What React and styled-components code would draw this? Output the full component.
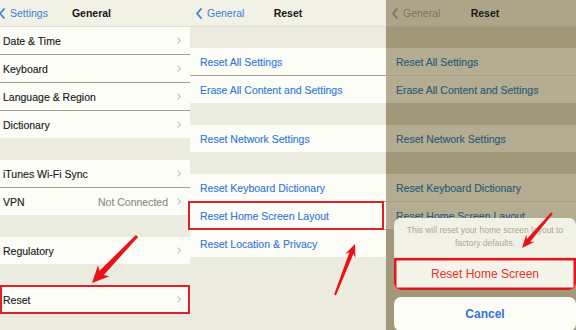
import React from 'react'
import styled, { createGlobalStyle } from 'styled-components'

const GlobalStyle = createGlobalStyle`
  html, body { margin: 0; padding: 0; background: #ecebdf; }
  body { font-family: "Liberation Sans", Arial, sans-serif; }
`

const light = {
  nav: '#f2f1e5', navLine: '#e0ded0', gap: '#ecebdf', row: '#fdfdf8', sep: '#e6e4d8',
  text: '#1c1c1a', link: '#3479d9', back: '#3a80dc', title: '#151515',
}
const dim = {
  nav: '#aca58a', navLine: '#a39c81', gap: '#a09879', row: '#b4ad92', sep: '#a69f84',
  text: '#1f1e19', link: '#2c5a77', back: '#7c7562', title: '#1a1913',
}

const Page = styled.div`
  position: relative;
  display: flex;
  width: 576px;
  height: 330px;
  overflow: hidden;
`
const Frame = styled.div`
  position: relative;
  flex: none;
  width: ${(p) => p.$w}px;
  height: 330px;
  overflow: ${(p) => (p.$clip ? 'hidden' : 'visible')};
`
const Screen = styled.div`
  width: ${(p) => p.$w}px;
  margin-left: ${(p) => p.$shift || 0}px;
  height: 330px;
  display: flex;
  flex-direction: column;
  background: ${(p) => p.$t.gap};
`
const NavBar = styled.div`
  flex: none;
  height: 26px;
  border-bottom: 1px solid ${(p) => p.$t.navLine};
  background: ${(p) => p.$t.nav};
  display: grid;
  grid-template-columns: 1fr auto 1fr;
  align-items: center;
  padding: 0 6px;
  font-size: 10.5px;
`
const Back = styled.div`
  display: flex;
  align-items: center;
  gap: 5px;
  color: ${(p) => p.$t.back};
`
const Title = styled.div`
  font-weight: bold;
  color: ${(p) => p.$t.title};
`
const Gap = styled.div`
  flex: none;
  height: ${(p) => p.$h}px;
`
const Group = styled.div`
  display: flex;
  flex-direction: column;
`
const Row = styled.div`
  position: relative;
  height: 27px;
  display: flex;
  align-items: center;
  padding: 0 9px 0 10px;
  background: ${(p) => p.$t.row};
  color: ${(p) => (p.$link ? p.$t.link : p.$t.text)};
  font-size: 10.5px;
  -webkit-text-stroke: 0.15px currentColor;
  & + & { border-top: 1px solid ${(p) => p.$t.sep}; }
  ${(p) => p.$mark && `
    &::after {
      content: '';
      position: absolute;
      top: -1px; bottom: -1px;
      left: ${p.$mark.left}px; right: ${p.$mark.right}px;
      border: 2.5px solid #e01f26;
      z-index: 3;
    }
  `}
`
const Label = styled.span`
  flex: 1;
  white-space: nowrap;
`
const Detail = styled.span`
  color: #8e8c80;
  margin-right: 9px;
`
const Sheet = styled.div`
  position: absolute;
  left: 8px;
  top: 218px;
  width: 182px;
  display: flex;
  flex-direction: column;
  gap: 7px;
  z-index: 2;
`
const SheetCard = styled.div`
  border-radius: 7px;
  background: #f2f1e5;
  overflow: hidden;
`
const Message = styled.div`
  padding: 6px 10px 7px;
  font-size: 8.5px;
  line-height: 13px;
  color: #aaa899;
  text-align: center;
`
const SheetButton = styled.div`
  height: ${(p) => (p.$cancel ? 34 : 32)}px;
  display: flex;
  align-items: center;
  justify-content: center;
  font-size: 12px;
  font-weight: ${(p) => (p.$cancel ? 'bold' : 'normal')};
  color: ${(p) => (p.$cancel ? '#2f74d9' : '#e5322b')};
  background: ${(p) => (p.$cancel ? '#fdfdf8' : '#f5f4ea')};
  border-top: ${(p) => (p.$cancel ? 'none' : '1px solid #dcdacd')};
  border-radius: ${(p) => (p.$cancel ? '7px' : '0')};
  box-shadow: ${(p) => (p.$mark ? 'inset 0 0 0 2.5px #e3161c' : 'none')};
`
const Arrows = styled.svg`
  position: absolute;
  left: 0;
  top: 0;
  pointer-events: none;
  z-index: 5;
`

function BackChevron() {
  return (
    <svg width="6" height="11" viewBox="0 0 6 11">
      <polyline points="5,1 1,5.5 5,10" fill="none" stroke="currentColor" strokeWidth="1.8" strokeLinecap="round" strokeLinejoin="round" />
    </svg>
  )
}

function RowChevron() {
  return (
    <svg width="4" height="7" viewBox="0 0 4 7">
      <polyline points="0.6,0.6 3.4,3.5 0.6,6.4" fill="none" stroke="#c4c2b5" strokeWidth="1.1" />
    </svg>
  )
}

function arrowPoints([x1, y1], [x2, y2], { tail = 1, shaft = 2.6, head = 7.5, len = 16 }) {
  const L = Math.hypot(x2 - x1, y2 - y1)
  const ux = (x2 - x1) / L
  const uy = (y2 - y1) / L
  const nx = -uy
  const ny = ux
  const bx = x2 - ux * len
  const by = y2 - uy * len
  const sx = x2 - ux * (len - 3)
  const sy = y2 - uy * (len - 3)
  const pts = [
    [x1 + nx * tail, y1 + ny * tail],
    [sx + nx * shaft, sy + ny * shaft],
    [bx + nx * head, by + ny * head],
    [x2, y2],
    [bx - nx * head, by - ny * head],
    [sx - nx * shaft, sy - ny * shaft],
    [x1 - nx * tail, y1 - ny * tail],
  ]
  return pts.map((p) => p.map((v) => v.toFixed(1)).join(',')).join(' ')
}

const generalGroups = [
  { gap: 0, rows: [{ label: 'Date & Time' }, { label: 'Keyboard' }, { label: 'Language & Region' }, { label: 'Dictionary' }] },
  { gap: 22, rows: [{ label: 'iTunes Wi-Fi Sync' }, { label: 'VPN', detail: 'Not Connected' }] },
  { gap: 22, rows: [{ label: 'Regulatory' }] },
  { gap: 22, rows: [{ label: 'Reset', mark: { left: 7, right: 0 } }] },
]

// the dimmed copy behind the action sheet leaves out the row the sheet hides
function resetGroups(markHome, withLocation) {
  const last = [
    { label: 'Reset Keyboard Dictionary' },
    { label: 'Reset Home Screen Layout', mark: markHome ? { left: -2, right: 2 } : null },
  ]
  if (withLocation) last.push({ label: 'Reset Location & Privacy' })
  return [
    { gap: 21, rows: [{ label: 'Reset All Settings' }, { label: 'Erase All Content and Settings' }] },
    { gap: 22, rows: [{ label: 'Reset Network Settings' }] },
    { gap: 22, rows: last },
  ]
}

function SettingsScreen({ t, width, shift, back, title, groups, link, chevrons }) {
  return (
    <Screen $t={t} $w={width} $shift={shift}>
      <NavBar $t={t}>
        <Back $t={t}>
          <BackChevron />
          <span>{back}</span>
        </Back>
        <Title $t={t}>{title}</Title>
        <span />
      </NavBar>
      {groups.map((g, i) => (
        <React.Fragment key={i}>
          {g.gap > 0 && <Gap $h={g.gap} />}
          <Group>
            {g.rows.map((r) => (
              <Row key={r.label} $t={t} $link={link} $mark={r.mark}>
                <Label>{r.label}</Label>
                {r.detail && <Detail>{r.detail}</Detail>}
                {chevrons && <RowChevron />}
              </Row>
            ))}
          </Group>
        </React.Fragment>
      ))}
    </Screen>
  )
}

export default function App() {
  return (
    <>
      <GlobalStyle />
      <Page>
        <Frame $w={190} $clip>
          <SettingsScreen t={light} width={197} shift={-7} back="Settings" title="General" groups={generalGroups} chevrons />
        </Frame>
        <Frame $w={196}>
          <SettingsScreen t={light} width={196} back="General" title="Reset" groups={resetGroups(true, true)} link />
        </Frame>
        <Frame $w={190} $clip>
          <SettingsScreen t={dim} width={198} back="General" title="Reset" groups={resetGroups(false, false)} link />
          <Sheet>
            <SheetCard>
              <Message>
                This will reset your home screen layout to
                <br />
                factory defaults.
              </Message>
              <SheetButton $mark>Reset Home Screen</SheetButton>
            </SheetCard>
            <SheetButton $cancel>Cancel</SheetButton>
          </Sheet>
        </Frame>
        <Arrows width="576" height="330" viewBox="0 0 576 330">
          <polygon points={arrowPoints([137, 236], [92, 283], { tail: 1.5, shaft: 3, head: 8, len: 17 })} fill="#e8121b" />
          <polygon points={arrowPoints([335, 295], [355, 244], { tail: 1, shaft: 2.2, head: 5.5, len: 13 })} fill="#e8121b" />
          <polygon points={arrowPoints([552, 213], [522, 248], { tail: 1, shaft: 2.2, head: 5.5, len: 13 })} fill="#e8121b" />
        </Arrows>
      </Page>
    </>
  )
}
